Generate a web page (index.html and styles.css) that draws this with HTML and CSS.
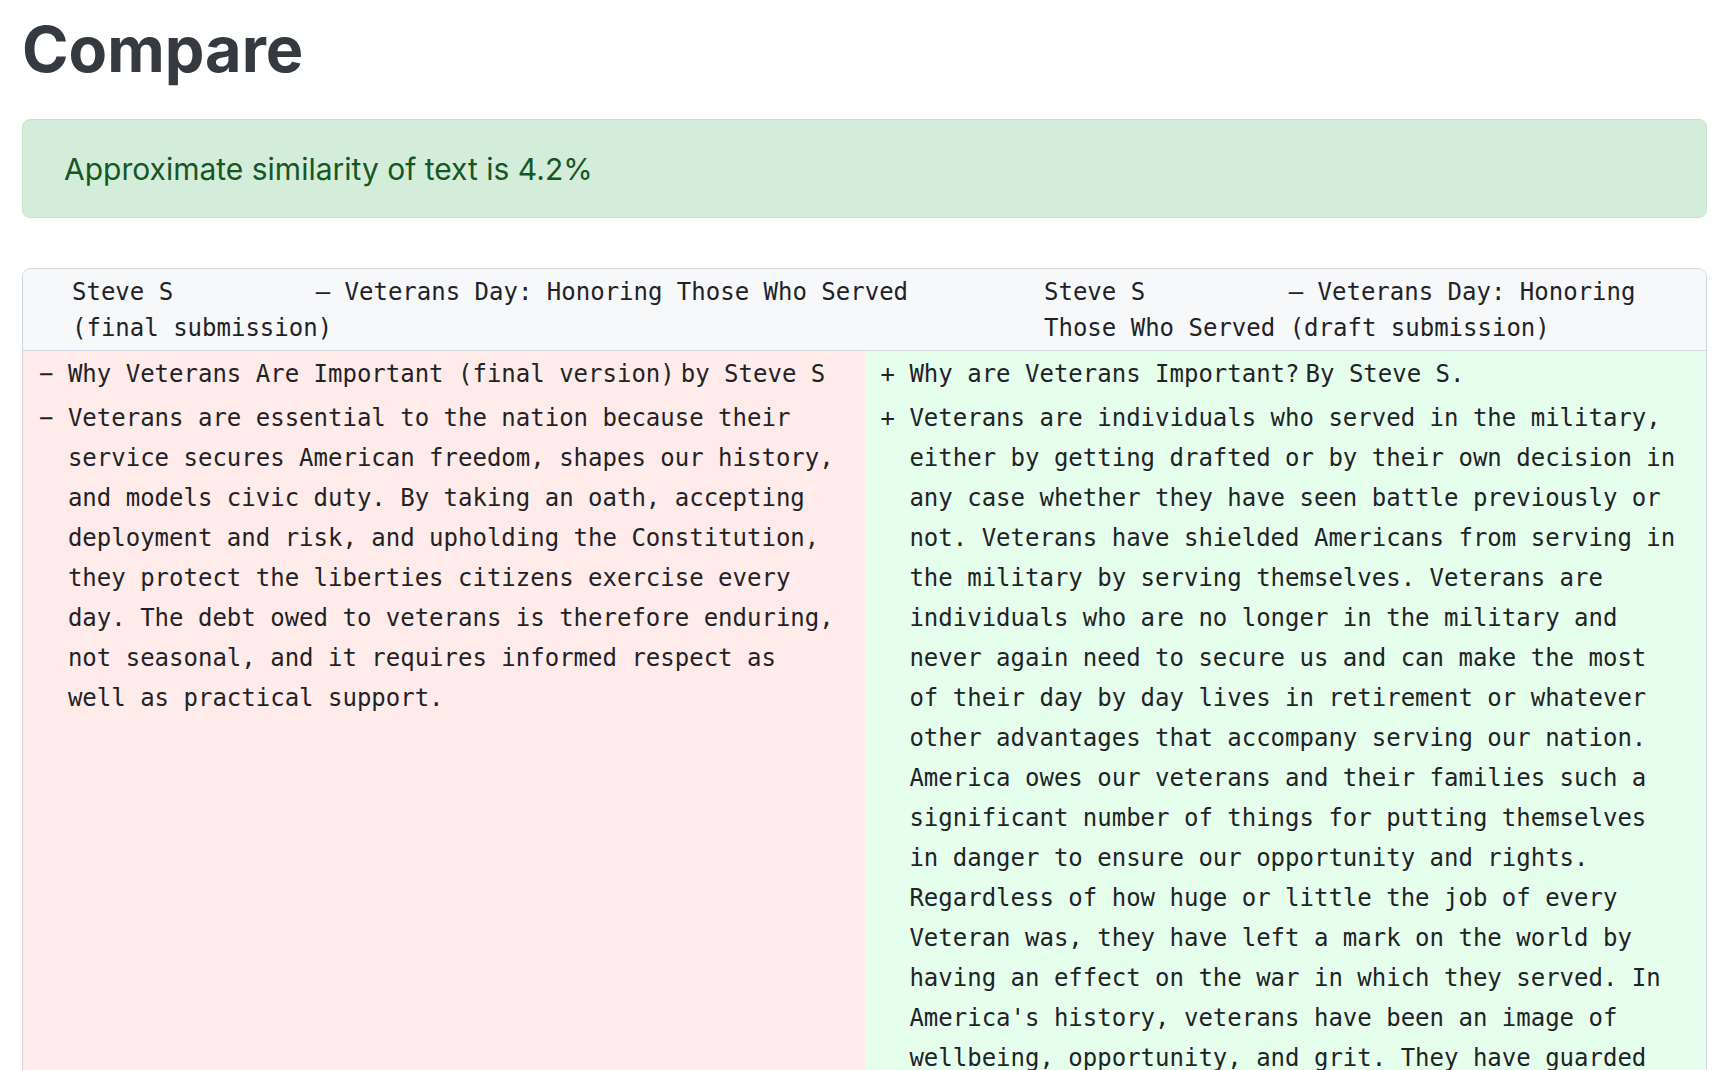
FILE: index.html
```html
<!DOCTYPE html>
<html lang="en">
<head>
<meta charset="utf-8">
<title>Compare</title>
<link rel="stylesheet" href="styles.css">
</head>
<body>
<main class="page">
  <h1 class="title">Compare</h1>
  <div class="alert">Approximate similarity of text is 4.2%</div>

  <section class="diff">
    <div class="diff-head">
      <div class="hcell hcell-left">Steve S<span class="redact"></span>– Veterans Day: Honoring Those Who Served (final submission)</div>
      <div class="hcell hcell-right">Steve S<span class="redact"></span>– Veterans Day: Honoring Those Who Served (draft submission)</div>
    </div>
    <div class="diff-body">
      <div class="side side-del">
        <div class="line"><span class="mark">−</span><span class="txt">Why Veterans Are Important (final version)<span class="tight"></span>by Steve S</span></div>
        <div class="line"><span class="mark">−</span><span class="txt">Veterans are essential to the nation because their service secures American freedom, shapes our history, and models civic duty. By taking an oath, accepting deployment and risk, and upholding the Constitution, they protect the liberties citizens exercise every day. The debt owed to veterans is therefore enduring, not seasonal, and it requires informed respect as well as practical support.</span></div>
      </div>
      <div class="side side-add">
        <div class="line"><span class="mark">+</span><span class="txt">Why are Veterans Important?<span class="tight"></span>By Steve S.</span></div>
        <div class="line"><span class="mark">+</span><span class="txt">Veterans are individuals who served in the military, either by getting drafted or by their own decision in any case whether they have seen battle previously or not. Veterans have shielded Americans from serving in the military by serving themselves. Veterans are individuals who are no longer in the military and never again need to secure us and can make the most of their day by day lives in retirement or whatever other advantages that accompany serving our nation. America owes our veterans and their families such a significant number of things for putting themselves in danger to ensure our opportunity and rights. Regardless of how huge or little the job of every Veteran was, they have left a mark on the world by having an effect on the war in which they served. In America's history, veterans have been an image of wellbeing, opportunity, and grit. They have guarded our nation and its people.</span></div>
      </div>
    </div>
  </section>
</main>
</body>
</html>
```

FILE: styles.css
```css
html, body {
  margin: 0;
  padding: 0;
  background: #ffffff;
}

.page {
  padding: 0 27px 0 22px;
}

.title {
  font-family: Inter, "Liberation Sans", sans-serif;
  font-weight: 700;
  font-size: 63px;
  line-height: 76px;
  color: #343a40;
  margin: 11px 0 32px;
}

.alert {
  font-family: Inter, "Liberation Sans", sans-serif;
  font-size: 30px;
  line-height: 45px;
  color: #155724;
  background: #d4edda;
  border: 1px solid #c3e6cb;
  border-radius: 8px;
  padding: 27px 41px 25px;
  margin-bottom: 50px;
}

.diff {
  border: 1px solid #d0d7de;
  border-radius: 9px;
  overflow: hidden;
  font-family: "DejaVu Sans Mono", monospace;
  font-size: 24px;
  color: #1f2328;
}

.diff-head {
  display: grid;
  grid-template-columns: 971px 1fr;
  background: #f6f8fa;
  border-bottom: 1px solid #d0d7de;
  line-height: 36px;
  padding: 5px 0 4px;
}

.hcell-left {
  padding: 0 24px 0 49px;
}

.hcell-left .redact {
  width: calc(10ch - 2px);
}

.hcell-right {
  padding: 0 20px 0 50px;
}

.hcell-right .redact {
  width: calc(10ch - 1px);
}

.redact {
  display: inline-block;
  width: 10ch;
}

.diff-body {
  display: grid;
  grid-template-columns: 1fr 1fr;
  min-height: 760px;
}

.side {
  padding: 1px 24px 0 16px;
}

.side-del {
  background: #ffebe9;
}

.side-add {
  background: #e6ffec;
}

.line {
  display: grid;
  grid-template-columns: 2ch 1fr;
  line-height: 40px;
  padding: 2px 0;
}

.tight {
  display: inline-block;
  width: 6px;
}
```
